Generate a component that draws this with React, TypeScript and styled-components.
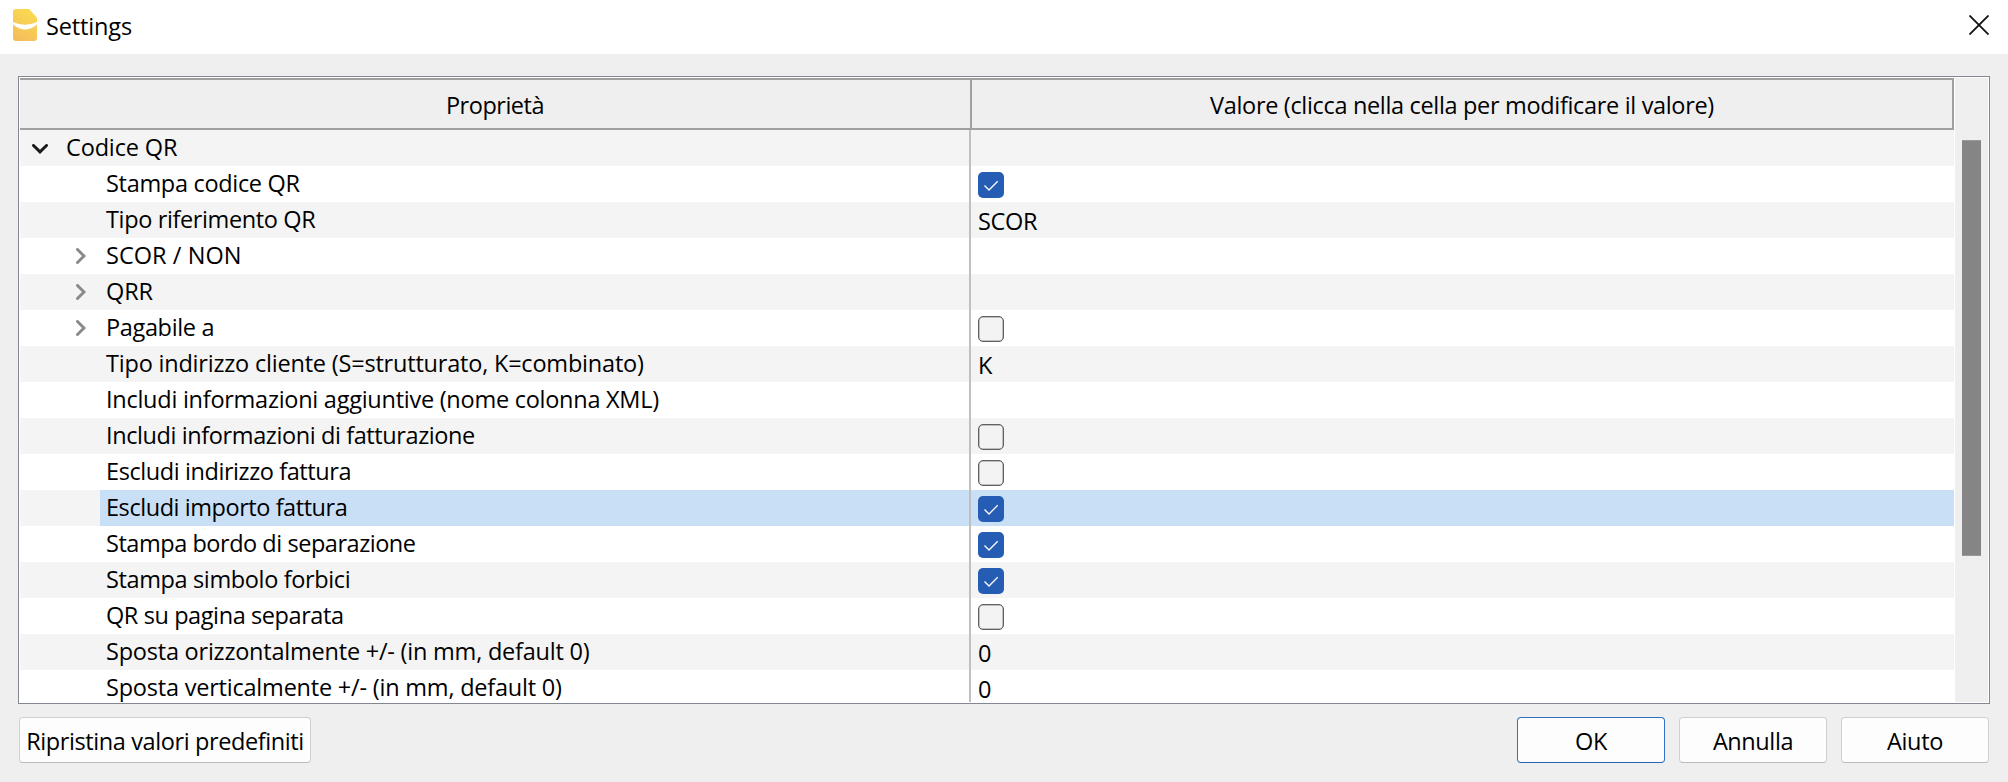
import React from 'react';
import styled, { createGlobalStyle } from 'styled-components';

const GlobalStyle = createGlobalStyle`
  *, *::before, *::after { box-sizing: border-box; }
  html, body { margin: 0; padding: 0; }
  body {
    background: #efefef;
    color: #000;
    font-family: 'Open Sans', 'Noto Sans', 'Liberation Sans', sans-serif;
    font-size: 23.5px;
    overflow: hidden;
  }
`;

const Dialog = styled.div`
  display: flex;
  flex-direction: column;
  width: 2008px;
  height: 782px;
  background: #efefef;
`;

const TitleBar = styled.header`
  display: flex;
  align-items: center;
  height: 54px;
  padding: 0 19px 0 13px;
  background: #fff;
`;

const AppIcon = styled.svg`
  width: 24px;
  height: 32px;
  margin: 0 9px 4px 0;
`;

const Title = styled.h1`
  flex: 1;
  margin: 0;
  padding-bottom: 2px;
  font-size: inherit;
  font-weight: 400;
  line-height: 32px;
  letter-spacing: -0.15px;
`;

const CloseButton = styled.button`
  display: flex;
  padding: 0;
  margin-bottom: 4px;
  border: 0;
  background: none;
`;

const Frame = styled.main`
  display: flex;
  width: 1972px;
  height: 628px;
  margin: 22px 0 0 18px;
  padding: 1px;
  border: 1px solid #83878f;
  background: #fff;
`;

const Table = styled.div`
  width: 1934px;
  height: 624px;
  margin-right: 1px;
`;

const HeaderRow = styled.div`
  display: grid;
  grid-template-columns: 950px 984px;
  height: 52px;
  border: solid #a0a0a0;
  border-width: 2px 0;
  background: #efefef;
`;

const HeaderCell = styled.div<{ $framed?: boolean; $spacing: number }>`
  display: flex;
  align-items: center;
  justify-content: center;
  padding-top: 2px;
  border: solid #a0a0a0;
  border-width: ${(p) => (p.$framed ? '0 2px' : '0')};
  letter-spacing: ${(p) => p.$spacing}px;
  white-space: pre;
`;

const Row = styled.div<{ $striped: boolean }>`
  display: grid;
  grid-template-columns: 949px 985px;
  height: 36px;
  background: ${(p) => (p.$striped ? '#f4f4f4' : '#fff')};

  &:last-child {
    height: 32px;
  }
`;

const NameCell = styled.div<{ $level: number }>`
  display: flex;
  padding-left: ${(p) => p.$level * 40}px;
`;

const Toggle = styled.span<{ $open?: boolean }>`
  display: flex;
  align-items: flex-start;
  width: 40px;
  padding: ${(p) => (p.$open ? '14px 0 0 12px' : '10px 0 0 16px')};
`;

const Label = styled.span<{ $selected?: boolean; $spacing: number }>`
  flex: 1;
  padding: 2px 0 0 6px;
  line-height: 30px;
  white-space: pre;
  letter-spacing: ${(p) => p.$spacing}px;
  background: ${(p) => (p.$selected ? '#c9dff5' : 'transparent')};
`;

const ValueCell = styled.div<{ $selected?: boolean }>`
  display: flex;
  align-items: flex-start;
  border-left: 2px solid #c0c0c0;
  padding: 6px 0 0 7px;
  line-height: 26px;
  letter-spacing: -0.3px;
  background: ${(p) => (p.$selected ? '#c9dff5' : 'transparent')};
`;

const Box = styled.span<{ $checked: boolean }>`
  display: flex;
  align-items: center;
  justify-content: center;
  width: 26px;
  height: 26px;
  border: ${(p) => (p.$checked ? '0' : '1px solid #606060')};
  border-radius: 5px;
  box-shadow: ${(p) => (p.$checked ? 'none' : 'inset 0 0 0 0.5px #8c8c8c')};
  background: ${(p) => (p.$checked ? '#265db4' : '#f3f3f3')};
`;

const ScrollTrack = styled.div`
  width: 33px;
  height: 624px;
  padding: 62px 0 0 7px;
  background: #efefef;
`;

const ScrollThumb = styled.div`
  width: 19px;
  height: 416px;
  border: solid #999;
  border-width: 1px 0;
  background: #858585;
`;

const Footer = styled.footer`
  display: flex;
  gap: 14px;
  margin: 13px 19px 0;
`;

const Spacer = styled.div`
  flex: 1;
`;

const Button = styled.button<{ $primary?: boolean; $width: number; $spacing: number }>`
  width: ${(p) => p.$width}px;
  height: 46px;
  padding: 1px 0 0;
  border: 1px solid ${(p) => (p.$primary ? '#2f72c4' : '#d0d0d0')};
  border-bottom-color: ${(p) => (p.$primary ? '#2563b4' : '#bababa')};
  border-radius: 4px;
  background: #fdfdfd;
  color: #000;
  font: inherit;
  letter-spacing: ${(p) => p.$spacing}px;
  white-space: pre;
`;

type Item = {
  label: string;
  level?: number;
  spacing: number;
  branch?: 'open' | 'closed';
  value?: string | boolean;
  selected?: boolean;
};

const items: Item[] = [
  { label: 'Codice QR', spacing: -0.15, level: 0, branch: 'open' },
  { label: 'Stampa codice QR', spacing: -0.31, value: true },
  { label: 'Tipo riferimento QR', spacing: -0.37, value: 'SCOR' },
  { label: 'SCOR / NON', spacing: 0.05, branch: 'closed' },
  { label: 'QRR', spacing: -0.1, branch: 'closed' },
  { label: 'Pagabile a', spacing: -0.35, branch: 'closed', value: false },
  { label: 'Tipo indirizzo cliente (S=strutturato, K=combinato)', spacing: -0.2, value: 'K' },
  { label: 'Includi informazioni aggiuntive (nome colonna XML)', spacing: -0.26 },
  { label: 'Includi informazioni di fatturazione', spacing: -0.4, value: false },
  { label: 'Escludi indirizzo fattura', spacing: -0.42, value: false },
  { label: 'Escludi importo fattura', spacing: -0.44, value: true, selected: true },
  { label: 'Stampa bordo di separazione', spacing: -0.46, value: true },
  { label: 'Stampa simbolo forbici', spacing: -0.37, value: true },
  { label: 'QR su pagina separata', spacing: -0.41, value: false },
  { label: 'Sposta orizzontalmente +/- (in mm, default 0)', spacing: -0.22, value: '0' },
  { label: 'Sposta verticalmente +/- (in mm, default 0)', spacing: -0.21, value: '0' },
];

const Chevron = ({ open }: { open: boolean }) =>
  open ? (
    <svg width="16" height="10" viewBox="0 0 16 10" fill="none" stroke="#1a1a1a" strokeWidth="3" strokeLinecap="round">
      <path d="M1.500 1.500 8 7.800 14.500 1.500" />
    </svg>
  ) : (
    <svg width="10" height="16" viewBox="0 0 10 16" fill="none" stroke="#8a8a8a" strokeWidth="3" strokeLinecap="round">
      <path d="M1.500 1.500 8 8 1.500 14.500" />
    </svg>
  );

const Checkbox = ({ checked }: { checked: boolean }) => (
  <Box $checked={checked} role="checkbox" aria-checked={checked}>
    {checked && (
      <svg width="26" height="26" viewBox="0 0 26 26" fill="none" stroke="#fff" strokeWidth="1.3">
        <path d="M6.500 13.500 11 18 19.700 9.300" />
      </svg>
    )}
  </Box>
);

export default function App() {
  return (
    <>
      <GlobalStyle />
      <Dialog>
        <TitleBar>
          <AppIcon viewBox="0 0 24 32">
            <defs>
              <linearGradient id="gold" x1="0.7" y1="0" x2="0.3" y2="1">
                <stop offset="0" stopColor="#fadb50" />
                <stop offset="1" stopColor="#f4bd5c" />
              </linearGradient>
            </defs>
            <path d="M3 0H16L24 8.500V29Q24 32 21 32H3Q0 32 0 29V3Q0 0 3 0Z" fill="url(#gold)" />
            <path d="M0 13Q12 18.500 24 13V15.500Q12 25.500 0 15.500Z" fill="#fff" />
          </AppIcon>
          <Title>Settings</Title>
          <CloseButton aria-label="Close">
            <svg width="20" height="20" viewBox="0 0 20 20" stroke="#111" strokeWidth="1.8">
              <path d="M0.500 0.500 19.500 19.500M19.500 0.500 0.500 19.500" />
            </svg>
          </CloseButton>
        </TitleBar>
        <Frame>
          <Table>
            <HeaderRow>
              <HeaderCell $spacing={-0.48}>Proprietà</HeaderCell>
              <HeaderCell $framed $spacing={-0.33}>
                Valore (clicca nella cella per modificare il valore)
              </HeaderCell>
            </HeaderRow>
            {items.map((item, i) => (
              <Row key={item.label} $striped={i % 2 === 0}>
                <NameCell $level={item.level ?? 1}>
                  <Toggle $open={item.branch === 'open'}>
                    {item.branch && <Chevron open={item.branch === 'open'} />}
                  </Toggle>
                  <Label $selected={item.selected} $spacing={item.spacing}>
                    {item.label}
                  </Label>
                </NameCell>
                <ValueCell $selected={item.selected}>
                  {typeof item.value === 'boolean' ? <Checkbox checked={item.value} /> : item.value}
                </ValueCell>
              </Row>
            ))}
          </Table>
          <ScrollTrack>
            <ScrollThumb />
          </ScrollTrack>
        </Frame>
        <Footer>
          <Button $width={292} $spacing={-0.4}>Ripristina valori predefiniti</Button>
          <Spacer />
          <Button $primary $width={148} $spacing={-0.3}>OK</Button>
          <Button $width={148} $spacing={-0.4}>Annulla</Button>
          <Button $width={148} $spacing={-0.3}>Aiuto</Button>
        </Footer>
      </Dialog>
    </>
  );
}
